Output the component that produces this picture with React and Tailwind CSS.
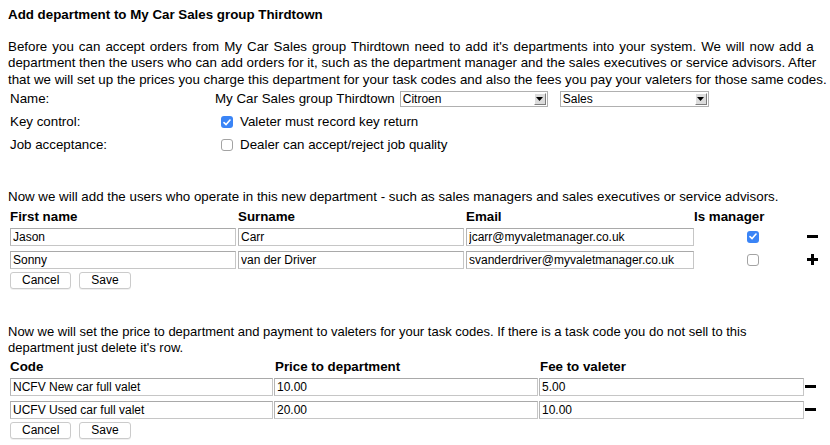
import React from "react";

function Check({ checked }) {
  if (checked) {
    return (
      <div className="w-[12px] h-[12px] rounded-[3px] bg-[#3a84f6] flex items-center justify-center shrink-0">
        <svg width="8" height="7" viewBox="0 0 8 7">
          <path d="M1 3.6 L3.1 5.6 L7 1" stroke="white" strokeWidth="1.6" fill="none" strokeLinecap="round" strokeLinejoin="round" />
        </svg>
      </div>
    );
  }
  return <div className="w-[12px] h-[12px] rounded-[3px] bg-white border border-[#a3a3a3] shrink-0" />;
}

function Select({ value, w }) {
  return (
    <div className={`relative h-[16px] border border-[#b0b0b0] bg-white text-[12px] leading-[14px] pl-[2px] ${w}`}>
      {value}
      <div className="absolute right-[1px] top-[1px] bottom-[1px] w-[12px] bg-[#dcdcdc] border-t border-l border-t-white border-l-white border-r border-b border-r-[#7c7c7c] border-b-[#7c7c7c] flex items-center justify-center">
        <svg width="7" height="4" viewBox="0 0 7 4">
          <polygon points="0,0 7,0 3.5,4" fill="black" />
        </svg>
      </div>
    </div>
  );
}

function Field({ value, cls }) {
  return (
    <input
      readOnly
      defaultValue={value}
      className={`h-[18px] border border-[#c6c6c6] border-t-[#a9a9a9] border-l-[#b5b5b5] bg-white text-[12px] px-[2px] outline-none ${cls}`}
    />
  );
}

function Minus() {
  return (
    <svg width="11" height="11" viewBox="0 0 11 11">
      <rect x="0" y="4" width="11" height="3" fill="black" />
    </svg>
  );
}

function Plus() {
  return (
    <svg width="11" height="11" viewBox="0 0 11 11">
      <rect x="0" y="4" width="11" height="3" fill="black" />
      <rect x="4" y="0" width="3" height="11" fill="black" />
    </svg>
  );
}

function Buttons() {
  return (
    <div className="flex gap-[8px] ml-[2px]">
      <button className="h-[17px] border border-[#cbcbcb] rounded-[3px] bg-white text-[12px] leading-none px-[11px] shadow-[0_1px_0_rgba(0,0,0,0.06)]">
        Cancel
      </button>
      <button className="h-[17px] border border-[#cbcbcb] rounded-[3px] bg-white text-[12px] leading-none px-[11px] shadow-[0_1px_0_rgba(0,0,0,0.06)]">
        Save
      </button>
    </div>
  );
}

export default function App() {
  const users = [
    { f: "Jason", s: "Carr", e: "jcarr@myvaletmanager.co.uk", m: true, plus: false },
    { f: "Sonny", s: "van der Driver", e: "svanderdriver@myvaletmanager.co.uk", m: false, plus: true },
  ];
  const codes = [
    { c: "NCFV New car full valet", p: "10.00", f: "5.00" },
    { c: "UCFV Used car full valet", p: "20.00", f: "10.00" },
  ];
  return (
    <div className="w-[830px] h-[445px] overflow-hidden bg-white text-black px-[8px] pt-[7px] font-['Liberation_Sans',Arial,sans-serif] text-[13.33px]">
      <div className="font-bold leading-[16px]">Add department to My Car Sales group Thirdtown</div>
      <p className="mt-[16px] leading-[16.3px] whitespace-nowrap">
        <span className="[word-spacing:1.35px]">
          Before you can accept orders from My Car Sales group Thirdtown need to add it's departments into your system. We will now add a
        </span>
        <br />
        department then the users who can add orders for it, such as the department manager and the sales executives or service advisors. After
        <br />
        that we will set up the prices you charge this department for your task codes and also the fees you pay your valeters for those same codes.
      </p>

      <div>
        <div className="flex items-center h-[23px]">
          <div className="w-[207px] pl-[2px]">Name:</div>
          <div className="flex items-center">
            <span>My Car Sales group Thirdtown</span>
            <div className="ml-[5px]">
              <Select value="Citroen" w="w-[148px]" />
            </div>
            <div className="ml-[12px]">
              <Select value="Sales" w="w-[149px]" />
            </div>
          </div>
        </div>
        <div className="flex items-center h-[23px]">
          <div className="w-[207px] pl-[2px]">Key control:</div>
          <div className="flex items-center pl-[6px]">
            <Check checked />
            <span className="ml-[7px]">Valeter must record key return</span>
          </div>
        </div>
        <div className="flex items-center h-[23px]">
          <div className="w-[207px] pl-[2px]">Job acceptance:</div>
          <div className="flex items-center pl-[6px]">
            <Check checked={false} />
            <span className="ml-[7px]">Dealer can accept/reject job quality</span>
          </div>
        </div>
      </div>

      <p className="mt-[32px] leading-[16px] whitespace-nowrap">
        Now we will add the users who operate in this new department - such as sales managers and sales executives or service advisors.
      </p>
      <div className="mt-[2px] h-[18px] grid grid-cols-[228px_228px_228px_115px_auto] items-center font-bold">
        <div className="pl-[2px]">First name</div>
        <div className="pl-[2px]">Surname</div>
        <div className="pl-[2px]">Email</div>
        <div className="pl-[2px]">Is manager</div>
        <div />
      </div>
      {users.map((u, i) => (
        <div
          key={i}
          className={`grid grid-cols-[228px_228px_228px_115px_auto] items-center ${i === 0 ? "mt-[3px]" : "mt-[5px]"}`}
        >
          <Field value={u.f} cls="ml-[2px] w-[226px]" />
          <Field value={u.s} cls="ml-[2px] w-[226px]" />
          <Field value={u.e} cls="ml-[2px] w-[228px]" />
          <div className="pl-[55px]">
            <Check checked={u.m} />
          </div>
          <div className="flex items-center">{u.plus ? <Plus /> : <Minus />}</div>
        </div>
      ))}
      <div className="mt-[3px]">
        <Buttons />
      </div>

      <p className="mt-[35px] leading-[16px] whitespace-nowrap text-[13px]">
        Now we will set the price to department and payment to valeters for your task codes. If there is a task code you do not sell to this
        <br />
        department just delete it's row.
      </p>
      <div className="mt-[1px] h-[18px] grid grid-cols-[265px_265px_265px_auto] items-center font-bold">
        <div className="pl-[2px]">Code</div>
        <div className="pl-[2px]">Price to department</div>
        <div className="pl-[2px]">Fee to valeter</div>
        <div />
      </div>
      {codes.map((c, i) => (
        <div
          key={i}
          className={`grid grid-cols-[265px_265px_265px_auto] items-center ${i === 0 ? "mt-[3px]" : "mt-[5px]"}`}
        >
          <Field value={c.c} cls="ml-[2px] w-[263px]" />
          <Field value={c.p} cls="ml-[1px] w-[264px]" />
          <Field value={c.f} cls="ml-[1px] w-[265px]" />
          <div className="flex items-center ml-[2px]">
            <Minus />
          </div>
        </div>
      ))}
      <div className="mt-[3px]">
        <Buttons />
      </div>
    </div>
  );
}
